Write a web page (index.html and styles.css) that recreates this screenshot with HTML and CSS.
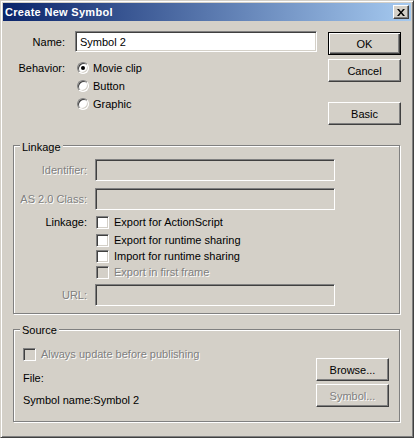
FILE: index.html
```html
<!DOCTYPE html>
<html>
<head>
<meta charset="utf-8">
<title>Create New Symbol</title>
<link rel="stylesheet" href="styles.css">
</head>
<body>
<div class="window">
  <div class="titlebar">
    <span class="title">Create New Symbol</span>
    <span class="close">
      <svg width="8" height="7" viewBox="0 0 8 7"><path d="M0 0 H2 L4 2.4 L6 0 H8 L5 3.5 L8 7 H6 L4 4.6 L2 7 H0 L3 3.5 Z" fill="#000"/></svg>
    </span>
  </div>
  <div class="content">
    <div class="top">
      <div class="form">
        <div class="name-row">
          <span class="lbl">Name:</span>
          <div class="input name-input">Symbol 2</div>
        </div>
        <div class="behavior-row">
          <span class="lbl lbl-tall">Behavior:</span>
          <div class="radios">
            <div class="radio-row"><span class="radio checked"></span><span>Movie clip</span></div>
            <div class="radio-row"><span class="radio"></span><span>Button</span></div>
            <div class="radio-row"><span class="radio"></span><span>Graphic</span></div>
          </div>
        </div>
      </div>
      <div class="buttons">
        <button class="btn default">OK</button>
        <button class="btn cancel">Cancel</button>
        <button class="btn basic">Basic</button>
      </div>
    </div>

    <div class="group linkage">
      <div class="legend">Linkage</div>
      <div class="lrow">
        <span class="llbl dis">Identifier:</span>
        <div class="input field-input disabled"></div>
      </div>
      <div class="lrow as-row">
        <span class="llbl dis">AS 2.0 Class:</span>
        <div class="input field-input disabled"></div>
      </div>
      <div class="lrow checks-row">
        <span class="llbl llbl-tall">Linkage:</span>
        <div class="checks">
          <div class="chk-row"><span class="cb"></span><span>Export for ActionScript</span></div>
          <div class="chk-row second"><span class="cb"></span><span>Export for runtime sharing</span></div>
          <div class="chk-row"><span class="cb"></span><span>Import for runtime sharing</span></div>
          <div class="chk-row"><span class="cb cb-dis"></span><span class="dis">Export in first frame</span></div>
        </div>
      </div>
      <div class="lrow url-row">
        <span class="llbl dis">URL:</span>
        <div class="input field-input disabled"></div>
      </div>
    </div>

    <div class="group source">
      <div class="legend src-legend">Source</div>
      <div class="src-body">
        <div class="src-left">
          <div class="chk-row"><span class="cb cb-dis src-cb"></span><span class="dis">Always update before publishing</span></div>
          <div class="src-line file-line">File:</div>
          <div class="src-line sym-line">Symbol name:Symbol 2</div>
        </div>
        <div class="src-buttons">
          <button class="btn">Browse...</button>
          <button class="btn symbol-btn dis">Symbol...</button>
        </div>
      </div>
    </div>
  </div>
</div>
</body>
</html>
```
FILE: styles.css
```css
body {
  margin: 0;
  font: 11px "Liberation Sans", Arial, sans-serif;
  color: #000;
  background: #d4d0c8;
}

.window {
  width: 414px;
  height: 438px;
  box-sizing: border-box;
  background: #d4d0c8;
  border: 1px solid;
  border-color: #d4d0c8 #404040 #404040 #d4d0c8;
  box-shadow: inset 1px 1px #fff, inset -1px -1px #808080;
  padding: 2px;
}

.titlebar {
  height: 18px;
  display: flex;
  align-items: center;
  background: linear-gradient(to right, #0a246a, #a6caf0);
  color: #fff;
  font-weight: bold;
  letter-spacing: 0.3px;
  padding-left: 2px;
}

.close {
  margin-left: auto;
  margin-right: 2px;
  width: 16px;
  height: 14px;
  box-sizing: border-box;
  background: #d4d0c8;
  border: 1px solid;
  border-color: #fff #404040 #404040 #fff;
  box-shadow: inset -1px -1px #808080;
  display: flex;
  align-items: center;
  justify-content: center;
}

.close svg { display: block; margin-left: -1px; }

.content {
  padding: 10px 10px 0;
}

.top {
  display: flex;
  justify-content: space-between;
  align-items: flex-start;
  margin-bottom: 20px;
}

.name-row {
  display: flex;
  align-items: center;
}

.lbl {
  width: 52px;
  margin-right: 10px;
  text-align: right;
  flex: none;
}

.lbl-tall { line-height: 18px; }

.input {
  box-sizing: border-box;
  height: 22px;
  border: 1px solid;
  border-color: #808080 #fff #fff #808080;
  box-shadow: inset 1px 1px #404040, inset -1px -1px #d4d0c8;
  background: #fff;
  padding: 0 4px;
  display: flex;
  align-items: center;
}

.name-input {
  width: 242px;
  height: 21px;
}

.behavior-row {
  display: flex;
  align-items: flex-start;
  margin-top: 7px;
}

.radios {
  display: flex;
  flex-direction: column;
}

.radio-row {
  height: 18px;
  display: flex;
  align-items: center;
}

.radio {
  width: 12px;
  height: 12px;
  box-sizing: border-box;
  border-radius: 50%;
  border: 1px solid;
  border-color: #808080 #fff #fff #808080;
  box-shadow: inset 1px 1px #404040, inset -1px -1px #d4d0c8;
  background: #fff;
  margin-left: 2px;
  margin-right: 4px;
  display: flex;
  align-items: center;
  justify-content: center;
}

.radio.checked::after {
  content: "";
  width: 4px;
  height: 4px;
  border-radius: 50%;
  background: #000;
}

.buttons {
  display: flex;
  flex-direction: column;
  width: 73px;
  margin-top: 1px;
}

.btn {
  height: 23px;
  box-sizing: border-box;
  background: #d4d0c8;
  border: 1px solid;
  border-color: #fff #404040 #404040 #fff;
  box-shadow: inset -1px -1px #808080;
  font: inherit;
  color: #000;
  padding: 0;
  display: flex;
  align-items: center;
  justify-content: center;
}

.btn.default {
  border-color: #000;
  box-shadow: inset 1px 1px #fff, inset -1px -1px #404040, inset -2px -2px #808080;
}

.cancel { margin-top: 4px; }
.basic { margin-top: 20px; }

.group {
  border: 1px solid #808080;
  box-shadow: 1px 1px #fff, inset 1px 1px #fff;
  margin-right: 1px;
}

.legend {
  display: table;
  background: #d4d0c8;
  padding: 0 2px;
  line-height: 13px;
  margin: -5px 0 5px 6px;
}

.linkage {
  padding-bottom: 7px;
}

.lrow {
  display: flex;
  align-items: center;
}

.llbl {
  width: 73px;
  margin-right: 8px;
  text-align: right;
  flex: none;
}

.llbl-tall { line-height: 16px; }

.field-input {
  width: 240px;
}

.input.disabled {
  background: #d4d0c8;
}

.as-row { margin-top: 7px; }

.checks-row {
  align-items: flex-start;
  margin-top: 4px;
}

.checks {
  display: flex;
  flex-direction: column;
}

.chk-row {
  height: 16px;
  display: flex;
  align-items: center;
}

.chk-row.second { margin-top: 2px; }

.cb {
  width: 13px;
  height: 13px;
  box-sizing: border-box;
  border: 1px solid;
  border-color: #808080 #fff #fff #808080;
  box-shadow: inset 1px 1px #404040, inset -1px -1px #d4d0c8;
  background: #fff;
  margin-left: 1px;
  margin-right: 5px;
  flex: none;
}

.cb.cb-dis { background: #d4d0c8; }

.url-row { margin-top: 4px; }

.dis {
  color: #808080;
  text-shadow: 1px 1px 0 #fff;
}

.source {
  margin-top: 15px;
  padding: 0 10px 13px 0;
}

.src-legend {
  margin: -6px 0 9px 6px;
}

.src-body {
  display: flex;
  justify-content: space-between;
  align-items: flex-start;
}

.src-left {
  padding-left: 9px;
}

.src-cb { margin-left: 0; }

.src-line {
  line-height: 16px;
}

.file-line { margin-top: 8px; }
.sym-line { margin-top: 6px; }

.src-buttons {
  display: flex;
  flex-direction: column;
  width: 73px;
  margin-top: 12px;
}

.symbol-btn {
  margin-top: 3px;
  color: #808080;
}
```
